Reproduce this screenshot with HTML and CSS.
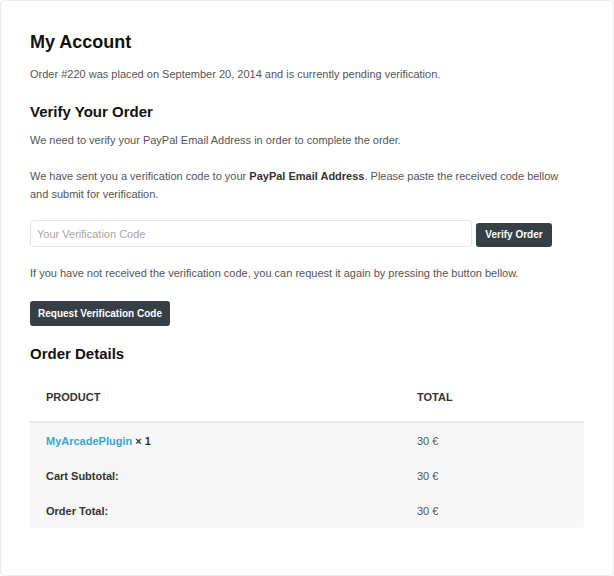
FILE: index.html
```html
<!DOCTYPE html>
<html>
<head>
<meta charset="utf-8">
<link rel="stylesheet" href="styles.css">
</head>
<body>
<div class="page">
  <h1 class="title">My Account</h1>
  <p class="text first">Order #220 was placed on September 20, 2014 and is currently pending verification.</p>
  <h2 class="subtitle verify-title">Verify Your Order</h2>
  <p class="text need">We need to verify your PayPal Email Address in order to complete the order.</p>
  <p class="text sent">We have sent you a verification code to your <strong>PayPal Email Address</strong>. Please paste the received code bellow and submit for verification.</p>
  <form class="verify-form">
    <input class="code-input" type="text" placeholder="Your Verification Code">
    <button class="btn verify-btn" type="button">Verify Order</button>
  </form>
  <p class="text again">If you have not received the verification code, you can request it again by pressing the button bellow.</p>
  <button class="btn request-btn" type="button">Request Verification Code</button>
  <h2 class="subtitle details-title">Order Details</h2>
  <table class="order-table">
    <thead>
      <tr><th class="col-product">Product</th><th class="col-total">Total</th></tr>
    </thead>
    <tbody>
      <tr><td class="col-product"><a class="product-link" href="#">MyArcadePlugin</a> <strong class="qty">× 1</strong></td><td class="col-total">30 €</td></tr>
      <tr><th class="col-product">Cart Subtotal:</th><td class="col-total">30 €</td></tr>
      <tr><th class="col-product">Order Total:</th><td class="col-total">30 €</td></tr>
    </tbody>
  </table>
</div>
</body>
</html>
```
FILE: styles.css
```css
html, body {
  margin: 0;
  padding: 0;
  background: #ffffff;
}
body {
  font-family: "Liberation Sans", Arial, sans-serif;
  font-size: 11px;
  line-height: 18px;
  color: #555555;
}
.page {
  box-sizing: border-box;
  width: 614px;
  height: 576px;
  border: 1px solid #ececec;
  border-radius: 4px;
  padding: 30px 29px 0 29px;
}
.title {
  margin: 0;
  font-size: 18px;
  line-height: 22px;
  font-weight: bold;
  color: #111111;
}
.subtitle {
  margin: 0;
  font-size: 15px;
  line-height: 20px;
  font-weight: bold;
  color: #111111;
}
.text {
  margin: 0;
}
.text strong {
  color: #333333;
}
.first { margin-top: 12px; }
.verify-title { margin-top: 19px; }
.need { margin-top: 9px; }
.sent {
  margin-top: 18px;
  max-width: 540px;
}
.verify-form {
  margin: 17px 0 0 0;
  display: flex;
  align-items: flex-end;
  gap: 4px;
}
.code-input {
  box-sizing: border-box;
  width: 442px;
  height: 27px;
  margin: 0;
  padding: 0 6px;
  border: 1px solid #e6e6e6;
  border-radius: 3px;
  font-family: "Liberation Sans", Arial, sans-serif;
  font-size: 11px;
  color: #555555;
  outline: none;
}
.code-input::placeholder {
  color: #a6a6a6;
}
.btn {
  box-sizing: border-box;
  margin: 0;
  border: 0;
  border-radius: 3px;
  background: #353f44;
  color: #ffffff;
  font-family: "Liberation Sans", Arial, sans-serif;
  font-size: 10px;
  font-weight: bold;
  line-height: 12px;
  cursor: pointer;
}
.verify-btn {
  width: 76px;
  height: 24px;
  padding: 0;
}
.again { margin-top: 17px; }
.request-btn {
  display: block;
  margin-top: 19px;
  width: 140px;
  height: 25px;
  padding: 0;
}
.details-title { margin-top: 18px; }
.order-table {
  margin-top: 8px;
  width: 554px;
  border-collapse: separate;
  border-spacing: 0;
  table-layout: fixed;
}
.order-table th,
.order-table td {
  text-align: left;
  padding: 0 0 0 16px;
  font-size: 11px;
  line-height: 18px;
  vertical-align: middle;
}
.order-table thead th {
  height: 49px;
  text-transform: uppercase;
  font-weight: bold;
  color: #333333;
  border-bottom: 2px solid #e6e6e6;
}
.order-table tbody th,
.order-table tbody td {
  height: 35px;
  background: #f7f7f7;
}
.order-table tbody th {
  font-weight: bold;
  color: #333333;
}
.order-table .col-product { width: 355px; }
.order-table .col-total { width: auto; }
.order-table tbody tr:last-child th { border-bottom-left-radius: 3px; }
.order-table tbody tr:last-child td { border-bottom-right-radius: 3px; }
.product-link {
  color: #37a6cf;
  font-weight: bold;
  text-decoration: none;
}
.qty {
  color: #333333;
}
```
